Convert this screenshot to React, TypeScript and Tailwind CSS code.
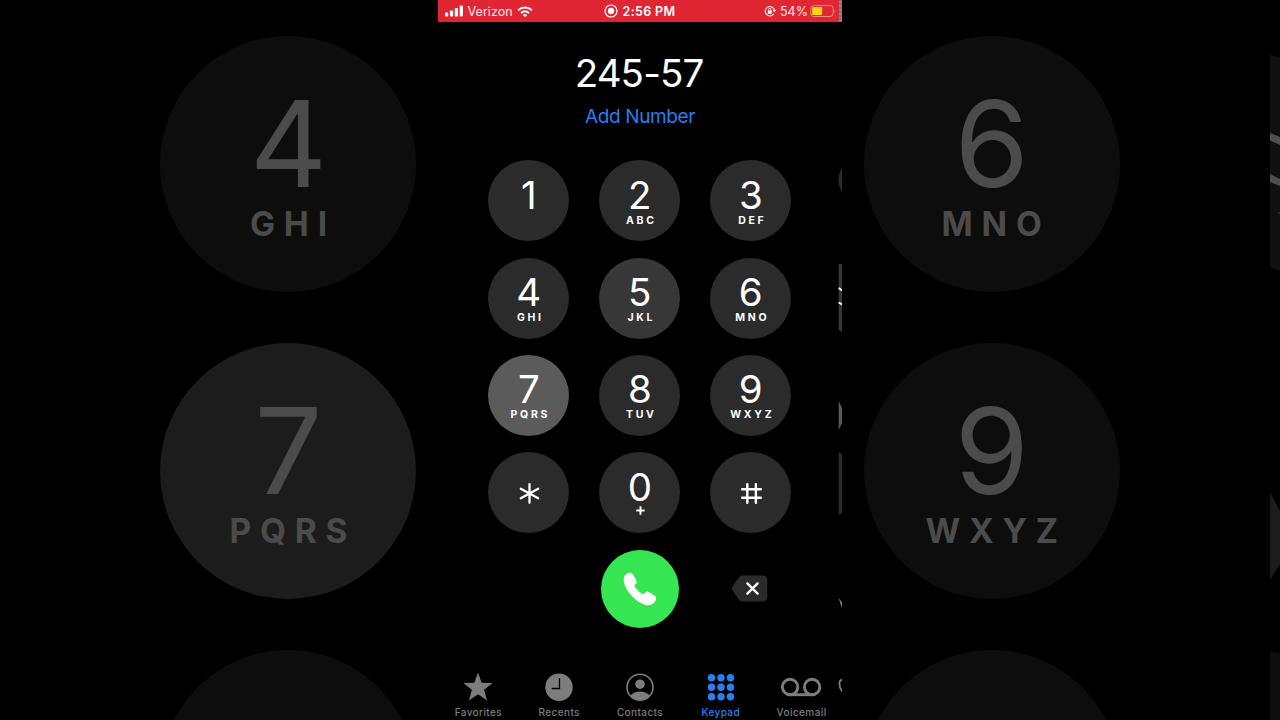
import React from "react";

type KeyData = { digit: string; letters?: string };

const KEYS: KeyData[] = [
  { digit: "1" },
  { digit: "2", letters: "ABC" },
  { digit: "3", letters: "DEF" },
  { digit: "4", letters: "GHI" },
  { digit: "5", letters: "JKL" },
  { digit: "6", letters: "MNO" },
  { digit: "7", letters: "PQRS" },
  { digit: "8", letters: "TUV" },
  { digit: "9", letters: "WXYZ" },
  { digit: "*" },
  { digit: "0", letters: "+" },
  { digit: "#" },
];

function keyColor(digit: string) {
  if (digit === "7") return "bg-[#5b5b5b]";
  if (digit === "5") return "bg-[#373737]";
  return "bg-[#2b2b2b]";
}

function StarGlyph() {
  return (
    <svg className="mt-[31px] ml-px h-[21px] w-[21px]" viewBox="0 0 21 21" stroke="#fff" strokeWidth="2.3" strokeLinecap="round">
      <path d="M10.5 1.2V19.8M1.8 5.8L19.2 15.2M19.2 5.8L1.8 15.2" />
    </svg>
  );
}

function PoundGlyph() {
  return (
    <svg className="mt-[31px] ml-px h-[21px] w-[21px]" viewBox="0 0 21 21" stroke="#fff" strokeWidth="2.4" strokeLinecap="round">
      <path d="M6.3 1.3V19.7M14.9 1.3V19.7M1.2 6.2H19.8M1.2 14.8H19.8" />
    </svg>
  );
}

function Key({ digit, letters }: KeyData) {
  return (
    <button className={`flex h-[81px] w-[81px] flex-col items-center rounded-full ${keyColor(digit)}`}>
      {digit === "*" ? (
        <StarGlyph />
      ) : digit === "#" ? (
        <PoundGlyph />
      ) : (
        <>
          <span className="mt-[14.7px] text-[38.5px] leading-[40px]">{digit}</span>
          {letters === "+" ? (
            <svg className="mt-[-1px] ml-px h-[9px] w-[9px]" viewBox="0 0 9 9" stroke="#fff" strokeWidth="1.9">
              <path d="M4.5 0.3V8.7M0.3 4.5H8.7" />
            </svg>
          ) : (
            letters && (
              <span className="mr-[-3px] text-[10.5px] leading-[11px] font-bold tracking-[2.7px]">{letters}</span>
            )
          )}
        </>
      )}
    </button>
  );
}

function BackdropKey({ digit, letters, color }: { digit?: string; letters?: string; color: string }) {
  return (
    <div className={`flex h-[256px] w-[256px] shrink-0 flex-col items-center rounded-full text-[#4b4b4b] ${color}`}>
      {digit && <span className="mt-[48px] text-[120px] leading-[120px]">{digit}</span>}
      {letters && (
        <span className="mt-[2px] mr-[-9px] text-[33.5px] leading-[36px] font-bold tracking-[8.8px]">{letters}</span>
      )}
    </div>
  );
}

function StatusBar() {
  return (
    <div className="flex h-[22px] shrink-0 items-center bg-[#df2632] pl-[7px] text-[12.5px] leading-[22px]">
      <svg className="h-[12px] w-[19px]" viewBox="0 0 19 12" fill="#fff">
        <rect x="0" y="7.6" width="3.2" height="3.9" rx="0.8" />
        <rect x="4.9" y="5.4" width="3.2" height="6.1" rx="0.8" />
        <rect x="9.8" y="3" width="3.2" height="8.5" rx="0.8" />
        <rect x="14.7" y="0.4" width="3.2" height="11.1" rx="0.8" />
      </svg>
      <span className="mt-px ml-[3.5px] w-[47px] tracking-[0.05px] whitespace-nowrap text-[#ffe9e9]">Verizon</span>
      <svg className="mt-[2px] ml-[2.5px] h-[12px] w-[16px]" viewBox="0 0 16 12" fill="none" stroke="#fff">
        <path d="M1.2 4.2C5 0.5 11 0.5 14.8 4.2" strokeWidth="2" />
        <path d="M4 7C6.4 4.8 9.6 4.8 12 7" strokeWidth="1.9" />
        <path d="M8 11.2L5.8 9Q8 7.2 10.2 9Z" fill="#fff" stroke="none" />
      </svg>
      <svg className="ml-[71px] h-[14px] w-[14px]" viewBox="0 0 14 14">
        <circle cx="7" cy="7" r="6" fill="none" stroke="#fff" strokeWidth="1.2" />
        <circle cx="7" cy="7" r="3.2" fill="#fff" />
      </svg>
      <span className="mt-px ml-[4.5px] w-[56px] font-semibold tracking-[0.35px] whitespace-nowrap">2:56 PM</span>
      <svg className="ml-[85px] h-[12px] w-[12px]" viewBox="0 0 12 12" fill="none" stroke="#fff">
        <path d="M9.9 8.8A4.7 4.7 0 1 1 10.5 5" strokeWidth="1.1" />
        <path d="M8.7 5H12L10.4 7.4Z" fill="#fff" stroke="none" />
        <rect x="3.8" y="5.4" width="4" height="3.3" rx="0.5" fill="#fff" stroke="none" />
        <path d="M4.6 5.6V4.5A1.2 1.2 0 0 1 7 4.5V5.6" strokeWidth="0.9" />
      </svg>
      <span className="mt-px ml-[4.5px] w-[28px] whitespace-nowrap text-[#ffe9e9]">54%</span>
      <svg className="ml-[1.5px] h-[12px] w-[27px]" viewBox="0 0 27 12">
        <rect x="0.8" y="0.5" width="22.4" height="11" rx="3" fill="none" stroke="#f08a8f" />
        <rect x="2.2" y="2" width="10" height="8" rx="1.3" fill="#ffd60a" />
        <path d="M24.6 4.2Q26.2 6 24.6 7.8Z" fill="#f08a8f" />
      </svg>
    </div>
  );
}

function CallRow() {
  return (
    <div className="mt-[17px] grid grid-cols-3 justify-items-center gap-x-[30px] self-center">
      <div className="w-[81px]" />
      <button className="flex h-[78px] w-[78px] items-center justify-center rounded-full bg-[#35e552]">
        <svg className="h-[34px] w-[34px]" viewBox="0 0 34 34" fill="#fff">
          <path d="M2.3 2.9C4 1 6.7 0.2 8.3 1.1C10 2.3 11.9 5.6 13.3 8.4C14.1 10.1 13.7 11.1 12.4 12.2C11.2 13.2 11.2 13.9 12 15.1C13.7 17.6 16.2 20 18.8 21.6C20.1 22.4 20.8 22.1 21.9 20.9C23.1 19.5 24.3 19.2 26.1 20.2L31.5 23.5C33.5 24.8 33.5 27.2 32.1 29.4C30 32.6 26.5 33.8 22.8 32.9C17 31.5 11.1 27.2 6.9 21.8C2.5 16 0.4 10.7 0.8 6.4C0.9 5 1.4 3.9 2.3 2.9Z" />
        </svg>
      </button>
      <button className="flex w-[81px] items-center pl-[20px]">
        <svg className="h-[27px] w-[37px]" viewBox="0 0 37 27">
          <path d="M11.5 0.5H31.2Q36.3 0.5 36.3 5.6V21.4Q36.3 26.5 31.2 26.5H11.5Q9.7 26.5 8.2 25L1.3 15.3Q0 13.5 1.3 11.7L8.2 2Q9.7 0.5 11.5 0.5Z" fill="#2b2b2b" />
          <path d="M16.4 8.4L26.6 18.6M26.6 8.4L16.4 18.6" stroke="#fff" strokeWidth="2.4" strokeLinecap="round" />
        </svg>
      </button>
    </div>
  );
}

function Tab({ label, active, children }: { label: string; active?: boolean; children: React.ReactNode }) {
  return (
    <button className={`flex flex-col items-center ${active ? "text-[#2b7ef0]" : "text-[#7d7d7d]"}`}>
      <svg className="h-[30px] w-[42px]" viewBox="0 0 42 30" fill="currentColor">
        {children}
      </svg>
      <span className="mt-[4px] text-[10px] leading-[13px] font-medium tracking-[0.4px]">{label}</span>
    </button>
  );
}

function TabBar() {
  const dots = [11.8, 21.3, 30.8];
  return (
    <nav className="mt-auto grid h-[48px] grid-cols-5">
      <Tab label="Favorites">
        <path d="M21 0.5L24.7 10.7L35.7 11.1L27.1 17.8L30.1 28.4L21 22.2L11.9 28.4L14.9 17.8L6.3 11.1L17.3 10.7Z" />
      </Tab>
      <Tab label="Recents">
        <circle cx="21" cy="15.2" r="13.7" />
        <path d="M21.5 6V16.5H13.6" fill="none" stroke="#000" strokeWidth="1.3" />
      </Tab>
      <Tab label="Contacts">
        <circle cx="21" cy="15.2" r="13" fill="none" stroke="currentColor" strokeWidth="1.6" />
        <circle cx="21" cy="12.2" r="4.8" />
        <path d="M11.6 23.3Q15 19.4 21 19.4T30.4 23.3Q26.5 28 21 28T11.6 23.3Z" />
      </Tab>
      <Tab label="Keypad" active>
        {dots.map((y) => dots.map((x) => <circle key={`${x}-${y}`} cx={x - 0.3} cy={y - 6} r="3.7" />))}
      </Tab>
      <Tab label="Voicemail">
        <g fill="none" stroke="currentColor" strokeWidth="2.9">
          <circle cx="9.1" cy="15" r="7.7" />
          <circle cx="31.1" cy="15" r="7.7" />
          <path d="M9.1 22.7H31.1" />
        </g>
      </Tab>
    </nav>
  );
}

/* Narrow band of stretched pixels along the right side of the recording. */
function PhoneEdge() {
  return (
    <svg className="absolute top-0 right-0 h-[720px] w-[4px]" viewBox="0 0 4 720">
      <rect x="0.8" y="0" width="3.2" height="22" fill="#a5606c" />
      {[1, 5, 9, 13, 17, 20].map((y) => (
        <rect key={y} x="1" y={y} width="3" height="1.3" fill="#8f8f96" />
      ))}
      <path d="M4 168Q0.6 173 0.6 180T4 192Z" fill="#2b2b2b" />
      <path d="M0.7 264H4V332L0.7 330Z" fill="#373737" />
      <path d="M0.7 288L4 290.5M0.7 302.5L4 304.5" stroke="#fff" strokeWidth="2" />
      <path d="M0.7 401L4 408V423L0.7 430Z" fill="#5b5b5b" />
      <path d="M0.7 452L4 454V513L0.7 515Z" fill="#2b2b2b" />
      <path d="M0.6 598L4 602.5V608Z" fill="#6f8f88" />
      <path d="M4 680Q1.4 680 1.4 683Q1.4 688 4 691.5" fill="none" stroke="#7d7d7d" strokeWidth="1.8" />
    </svg>
  );
}

function BackdropEdge() {
  return (
    <svg className="h-[720px] w-[10px] shrink-0" viewBox="0 0 10 720">
      <path d="M0 55L10 57.5V271L0 267Z" fill="#101010" />
      <path d="M0 133L10 137V145L0 140.5Z" fill="#4f4f4f" />
      <path d="M0 174L10 179V186L0 182Z" fill="#4f4f4f" />
      <path d="M7 213L10 211.5V214.5Z" fill="#2c2c2c" />
      <path d="M0 492L10 511V564L0 580Z" fill="#1c1c1c" />
      <path d="M0 651L10 653V720H0Z" fill="#0d0d0d" />
    </svg>
  );
}

export default function App() {
  return (
    <div className="flex h-[720px] w-[1280px] overflow-hidden bg-black font-['Inter','Liberation_Sans',sans-serif] text-white">
      <aside className="flex h-full w-[438px] shrink-0 flex-col gap-[51px] overflow-hidden pt-[36px] pl-[160.4px]">
        <BackdropKey digit="4" letters="GHI" color="bg-[#0d0d0d]" />
        <BackdropKey digit="7" letters="PQRS" color="bg-[#1c1c1c]" />
        <BackdropKey color="bg-[#0d0d0d]" />
      </aside>

      <main className="relative flex h-full w-[404px] shrink-0 flex-col">
        <StatusBar />
        <h1 className="mt-[31px] mr-[2px] text-center text-[38.5px] leading-[40px] font-normal tracking-[-0.9px]">245-57</h1>
        <button className="mt-[14px] text-[19px] leading-[20px] tracking-[-0.4px] text-[#2b7ef0]">Add Number</button>
        <div className="mt-[33.4px] mr-[0.4px] grid grid-cols-3 gap-x-[30px] gap-y-[16.2px] self-center">
          {KEYS.map((k) => (
            <Key key={k.digit} {...k} />
          ))}
        </div>
        <CallRow />
        <TabBar />
        <PhoneEdge />
      </main>

      <aside className="flex h-full w-[438px] shrink-0 justify-between overflow-hidden pl-[21.6px]">
        <div className="flex flex-col gap-[51px] pt-[36px]">
          <BackdropKey digit="6" letters="MNO" color="bg-[#0d0d0d]" />
          <BackdropKey digit="9" letters="WXYZ" color="bg-[#0d0d0d]" />
          <BackdropKey color="bg-[#0d0d0d]" />
        </div>
        <BackdropEdge />
      </aside>
    </div>
  );
}
